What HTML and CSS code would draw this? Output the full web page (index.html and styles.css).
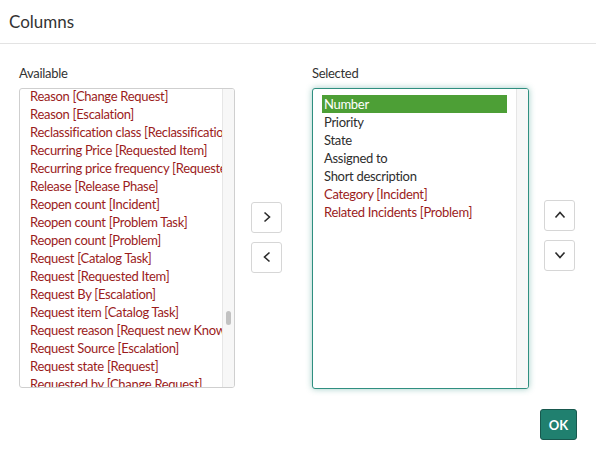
FILE: index.html
```html
<!DOCTYPE html>
<html lang="en">
<head>
  <meta charset="UTF-8" />
  <title>Columns</title>
  <link rel="stylesheet" href="styles.css">
</head>
<body>

  <div class="modal-header">Columns</div>

  <div class="modal-body">
    <div class="column">
      <label class="col-label">Available</label>
      <div class="list-box">
        <div class="list-view">
          <ul class="list scrolled">
            <li class="ref">Reason [Change Request]</li>
            <li class="ref">Reason [Escalation]</li>
            <li class="ref">Reclassification class [Reclassification Task]</li>
            <li class="ref">Recurring Price [Requested Item]</li>
            <li class="ref">Recurring price frequency [Requested Item]</li>
            <li class="ref">Release [Release Phase]</li>
            <li class="ref">Reopen count [Incident]</li>
            <li class="ref">Reopen count [Problem Task]</li>
            <li class="ref">Reopen count [Problem]</li>
            <li class="ref">Request [Catalog Task]</li>
            <li class="ref">Request [Requested Item]</li>
            <li class="ref">Request By [Escalation]</li>
            <li class="ref">Request item [Catalog Task]</li>
            <li class="ref">Request reason [Request new Knowledge Base]</li>
            <li class="ref">Request Source [Escalation]</li>
            <li class="ref">Request state [Request]</li>
            <li class="ref">Requested by [Change Request]</li>
          </ul>
        </div>
        <div class="scroll-track"><span class="scroll-thumb"></span></div>
      </div>
    </div>

    <div class="move-buttons">
      <button class="icon-btn" title="Add">
        <svg width="14" height="14" viewBox="0 0 14 14"><path d="M4.5 2.5 L9.5 7 L4.5 11.5" fill="none" stroke="#2b2b2b" stroke-width="1.6"/></svg>
      </button>
      <button class="icon-btn" title="Remove">
        <svg width="14" height="14" viewBox="0 0 14 14"><path d="M9.5 2.5 L4.5 7 L9.5 11.5" fill="none" stroke="#2b2b2b" stroke-width="1.6"/></svg>
      </button>
    </div>

    <div class="column selected-col">
      <label class="col-label">Selected</label>
      <div class="list-box focused">
        <div class="list-view">
          <ul class="list">
            <li class="active">Number</li>
            <li>Priority</li>
            <li>State</li>
            <li>Assigned to</li>
            <li>Short description</li>
            <li class="ref">Category [Incident]</li>
            <li class="ref">Related Incidents [Problem]</li>
          </ul>
        </div>
        <div class="scroll-track"></div>
      </div>
    </div>

    <div class="move-buttons order-buttons">
      <button class="icon-btn" title="Move up">
        <svg width="14" height="14" viewBox="0 0 14 14"><path d="M2.5 9.5 L7 4.5 L11.5 9.5" fill="none" stroke="#2b2b2b" stroke-width="1.6"/></svg>
      </button>
      <button class="icon-btn" title="Move down">
        <svg width="14" height="14" viewBox="0 0 14 14"><path d="M2.5 4.5 L7 9.5 L11.5 4.5" fill="none" stroke="#2b2b2b" stroke-width="1.6"/></svg>
      </button>
    </div>
  </div>

  <div class="modal-footer">
    <button class="btn-primary">OK</button>
  </div>

</body>
</html>
```

FILE: styles.css
```css
body {
  font-family: Lato, "Liberation Sans", sans-serif;
  color: #2e2e2e;
  background: #fff;
  margin: 0;
  font-size: 13px;
  letter-spacing: -0.3px;
}
.modal-header {
  height: 44px;
  box-sizing: border-box;
  padding: 11px 9px 0;
  font-size: 17px;
  letter-spacing: 0;
  color: #333;
  border-bottom: 1px solid #e3e3e3;
}
.modal-body {
  display: flex;
  padding: 21px 0 0 19px;
}
.column {
  display: flex;
  flex-direction: column;
  width: 216px;
}
.selected-col {
  width: 217px;
}
.col-label {
  height: 23px;
  font-size: 13px;
  color: #333;
}
.list-box {
  display: flex;
  height: 300px;
  box-sizing: border-box;
  border: 1px solid #cfcfcf;
  border-radius: 3px;
  background: #fff;
  overflow: hidden;
}
.list-box.focused {
  height: 301px;
  border-color: #2f8f80;
  box-shadow: 0 0 6px rgba(47, 143, 128, 0.45);
}
.list-view {
  flex: 1;
  min-width: 0;
  overflow: hidden;
}
.list {
  list-style: none;
  margin: 0;
  padding: 6px 9px 0 9px;
}
.list.scrolled {
  margin-top: -2px;
  padding: 0 0 0 10px;
}
.list li {
  height: 18px;
  line-height: 18px;
  white-space: nowrap;
  overflow: hidden;
  padding-left: 2px;
}
.list.scrolled li {
  padding-left: 0;
}
.list li.ref {
  color: #9b1c1c;
}
.list li.active {
  background: #4d9f36;
  color: #fff;
}
.scroll-track {
  width: 11px;
  background: #f7f7f7;
  border-left: 1px solid #e6e6e6;
  position: relative;
}
.scroll-thumb {
  position: absolute;
  left: 3px;
  top: 222px;
  width: 5px;
  height: 14px;
  border-radius: 3px;
  background: #c2c2c2;
}
.move-buttons {
  display: flex;
  flex-direction: column;
  justify-content: center;
  gap: 9px;
  padding: 20px 30px 0 16px;
}
.order-buttons {
  padding: 16px 0 0 15px;
}
.icon-btn {
  width: 31px;
  height: 31px;
  padding: 0;
  display: flex;
  align-items: center;
  justify-content: center;
  background: #fff;
  border: 1px solid #d6d6d6;
  border-radius: 3px;
}
.modal-footer {
  display: flex;
  justify-content: flex-end;
  padding: 20px 19px 0 0;
}
.btn-primary {
  width: 37px;
  height: 31px;
  padding: 0;
  background: #20806f;
  border: 1px solid #18584e;
  border-radius: 3px;
  color: #fff;
  font-family: Lato, "Liberation Sans", sans-serif;
  font-size: 13px;
  font-weight: 700;
}
```
